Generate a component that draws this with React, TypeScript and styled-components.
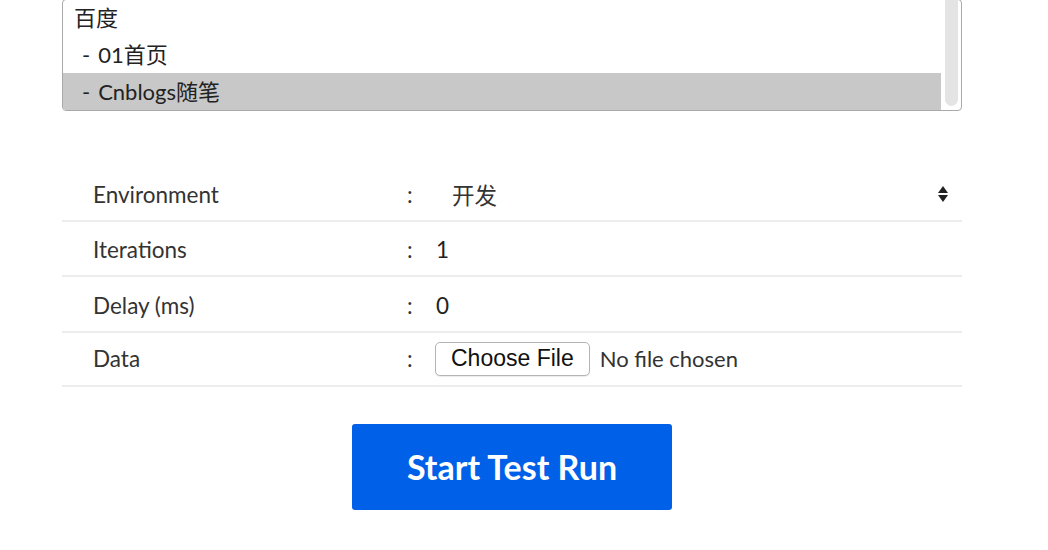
import * as React from 'react'
import styled, { createGlobalStyle } from 'styled-components'

const GlobalStyle = createGlobalStyle`
  html, body {
    margin: 0;
    padding: 0;
    background: #fff;
    overflow: hidden;
  }
  body {
    font-family: Lato, "Noto Sans CJK SC", "Noto Sans", sans-serif;
    color: #333;
  }
`

const Page = styled.div`
  width: 900px;
  margin: 0 0 0 62px;
  display: flex;
  flex-direction: column;
`

const ListBox = styled.div`
  margin-top: -1px;
  height: 112px;
  box-sizing: border-box;
  border: 1px solid #a9a9a9;
  border-radius: 4px;
  display: flex;
  overflow: hidden;
`

const Options = styled.div`
  flex: 1;
  display: flex;
  flex-direction: column;
  justify-content: flex-end;
`

const Option = styled.div<{ selected?: boolean; indent?: boolean }>`
  height: 37px;
  line-height: 37px;
  padding-left: ${p => (p.indent ? '19px' : '11px')};
  font-size: 22px;
  color: #222;
  background: ${p => (p.selected ? '#c8c8c8' : 'transparent')};
  white-space: pre;
`

const Dash = styled.span`
  margin-right: 8px;
`

const ScrollTrack = styled.div`
  width: 20px;
  display: flex;
  justify-content: center;
  padding-bottom: 4px;
  box-sizing: border-box;
`

const Thumb = styled.div`
  width: 13px;
  background: #e4e4e4;
  border-radius: 0 0 7px 7px;
`

const Table = styled.div`
  margin-top: 55px;
  display: flex;
  flex-direction: column;
`

const Row = styled.div<{ compact?: boolean }>`
  height: ${p => (p.compact ? '54px' : '55.5px')};
  box-sizing: border-box;
  padding-top: ${p => (p.compact ? '0' : '3px')};
  display: flex;
  align-items: center;
  border-bottom: 2px solid #ededed;
  font-size: 22.5px;
`

const Label = styled.div`
  width: 314px;
  padding-left: 31px;
  color: #333;
`

const Colon = styled.div`
  width: 29px;
  color: #333;
`

const Value = styled.div`
  flex: 1;
  display: flex;
  align-items: center;
  color: #222;
`

const SelectBox = styled.div`
  flex: 1;
  display: flex;
  align-items: center;
  justify-content: space-between;
  padding-left: 16px;
  padding-right: 13px;
`

const Arrows = styled.svg`
  width: 12px;
  height: 20px;
`

const FileButton = styled.button`
  height: 34px;
  padding: 0 15px;
  margin-left: -1px;
  border: 1px solid #b4b4b4;
  border-radius: 5px;
  background: #fff;
  font-family: "Liberation Sans", Arial, sans-serif;
  font-size: 23px;
  color: #111;
  box-shadow: 0 1px 1px rgba(0, 0, 0, 0.08);
`

const FileText = styled.span`
  margin-left: 10px;
  color: #333;
  font-size: 22px;
`

const Actions = styled.div`
  display: flex;
  justify-content: center;
  margin-top: 37px;
`

const RunButton = styled.button`
  width: 320px;
  height: 86px;
  border: none;
  border-radius: 3px;
  background: #0061e8;
  color: #fff;
  font-family: Lato, sans-serif;
  font-weight: 700;
  font-size: 34px;
  cursor: pointer;
`

const App: React.FC = () => {
  return (
    <>
      <GlobalStyle />
      <Page>
        <ListBox>
          <Options>
            <Option>百度</Option>
            <Option indent><Dash>-</Dash>01首页</Option>
            <Option indent selected><Dash>-</Dash>Cnblogs随笔</Option>
          </Options>
          <ScrollTrack>
            <Thumb />
          </ScrollTrack>
        </ListBox>

        <Table>
          <Row>
            <Label>Environment</Label>
            <Colon>:</Colon>
            <SelectBox>
              <span>开发</span>
              <Arrows viewBox="0 0 12 20">
                <path d="M6 2 L11 9 L1 9 Z" fill="#222" />
                <path d="M6 18 L11 11 L1 11 Z" fill="#222" />
              </Arrows>
            </SelectBox>
          </Row>
          <Row>
            <Label>Iterations</Label>
            <Colon>:</Colon>
            <Value>1</Value>
          </Row>
          <Row>
            <Label>Delay (ms)</Label>
            <Colon>:</Colon>
            <Value>0</Value>
          </Row>
          <Row compact>
            <Label>Data</Label>
            <Colon>:</Colon>
            <Value>
              <FileButton>Choose File</FileButton>
              <FileText>No file chosen</FileText>
            </Value>
          </Row>
        </Table>

        <Actions>
          <RunButton>Start Test Run</RunButton>
        </Actions>
      </Page>
    </>
  )
}

export default App
